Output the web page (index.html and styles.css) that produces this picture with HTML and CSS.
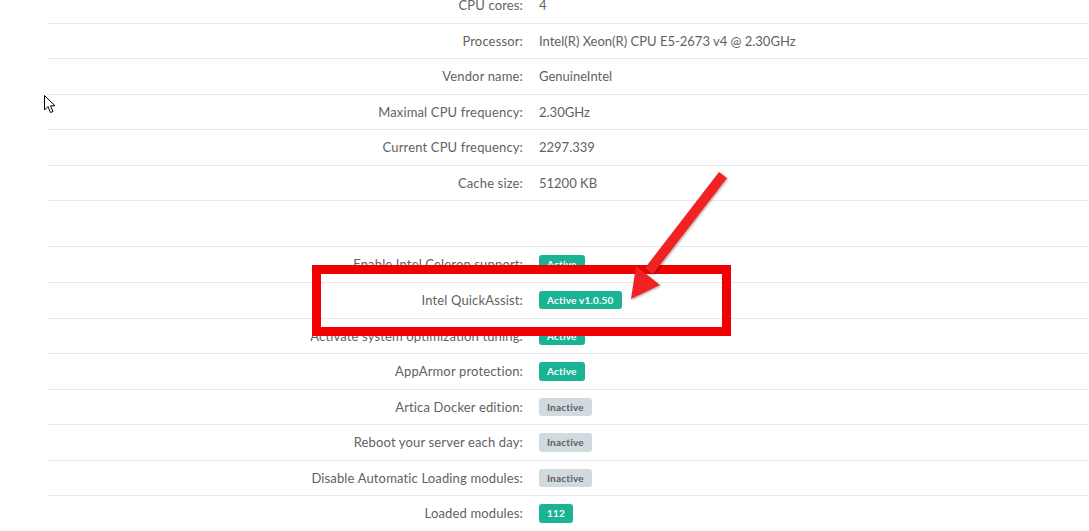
FILE: index.html
```html
<!DOCTYPE html>
<html lang="en">
<head>
  <meta charset="UTF-8">
  <title>System information</title>
  <link rel="stylesheet" href="styles.css">
</head>
<body>
  <div class="wrapper">
    <table class="info-table">
      <tr><td class="lbl">CPU cores:</td><td>4</td></tr>
      <tr><td class="lbl">Processor:</td><td>Intel(R) Xeon(R) CPU E5-2673 v4 @ 2.30GHz</td></tr>
      <tr><td class="lbl">Vendor name:</td><td>GenuineIntel</td></tr>
      <tr><td class="lbl">Maximal CPU frequency:</td><td>2.30GHz</td></tr>
      <tr><td class="lbl">Current CPU frequency:</td><td>2297.339</td></tr>
      <tr><td class="lbl">Cache size:</td><td>51200 KB</td></tr>
      <tr class="blank"><td class="lbl"></td><td></td></tr>
      <tr><td class="lbl">Enable Intel Celeron support:</td><td><span class="badge on">Active</span></td></tr>
      <tr><td class="lbl">Intel QuickAssist:</td><td><span class="badge on">Active v1.0.50</span></td></tr>
      <tr><td class="lbl">Activate system optimization tuning:</td><td><span class="badge on">Active</span></td></tr>
      <tr><td class="lbl">AppArmor protection:</td><td><span class="badge on">Active</span></td></tr>
      <tr><td class="lbl">Artica Docker edition:</td><td><span class="badge off">Inactive</span></td></tr>
      <tr><td class="lbl">Reboot your server each day:</td><td><span class="badge off">Inactive</span></td></tr>
      <tr><td class="lbl">Disable Automatic Loading modules:</td><td><span class="badge off">Inactive</span></td></tr>
      <tr><td class="lbl">Loaded modules:</td><td><span class="badge on">112</span></td></tr>
    </table>
  </div>

  <!-- annotation overlays -->
  <div class="mark-box"></div>
  <svg class="mark-arrow" width="1089" height="531" viewBox="0 0 1089 531">
    <defs>
      <filter id="sh" x="-20%" y="-20%" width="140%" height="140%">
        <feDropShadow dx="1" dy="1" stdDeviation="1.2" flood-color="#000" flood-opacity="0.35"/>
      </filter>
    </defs>
    <g filter="url(#sh)" fill="#f02424">
      <polygon points="719,172 727,178 653,274 645,268"/>
      <polygon points="631,299 636,266 660,285"/>
    </g>
  </svg>
  <svg class="cursor" width="14" height="20" viewBox="0 0 14 20">
    <path d="M0.5 0.5 L0.5 15 L4 11.5 L6.5 17.5 L9 16.5 L6.5 10.8 L11 10.8 Z" fill="#fff" stroke="#000" stroke-width="1"/>
  </svg>
</body>
</html>
```
FILE: styles.css
```css
body {
  margin: 0;
  font-family: Lato, "Open Sans", Arial, sans-serif;
  font-size: 13px;
  color: #5f6264;
  background: #fff;
  overflow: hidden;
}
.wrapper {
  padding-left: 47px;
  margin-top: -12px;
}
.info-table {
  width: 1100px;
  border-collapse: collapse;
}
.info-table td {
  padding: 8px;
  line-height: 18.57px;
  border-bottom: 1px solid #e7eaec;
  vertical-align: middle;
}
.info-table td.lbl {
  width: 468px;
  text-align: right;
  letter-spacing: 0.15px;
}
.info-table tr.blank td {
  height: 29px;
}
.badge {
  display: inline-block;
  font-size: 10px;
  font-weight: 700;
  line-height: 12.5px;
  padding: 3px 8px;
  border-radius: 3px;
  letter-spacing: 0.2px;
  vertical-align: top;
}
.badge.on {
  background: #1ab394;
  color: #fff;
}
.badge.off {
  background: #d1dade;
  color: #5e5e5e;
}
.mark-box {
  position: absolute;
  left: 312px;
  top: 265px;
  width: 401px;
  height: 53px;
  border: 9px solid #f00000;
}
.mark-arrow {
  position: absolute;
  left: 0;
  top: 0;
}
.cursor {
  position: absolute;
  left: 44px;
  top: 95px;
}
```
